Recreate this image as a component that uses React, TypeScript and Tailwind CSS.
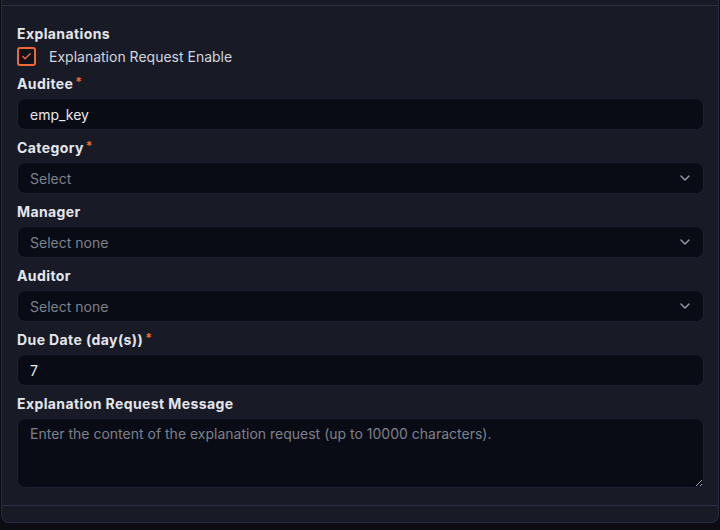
import { ChevronDown, Check } from "lucide-react";

function Label({ text, required }: { text: string; required?: boolean }) {
	return (
		<div className="flex h-5 translate-y-px items-center text-[14px] font-bold leading-5 tracking-[0.4px] text-[#e4e6ec]">
			<span>{text}</span>
			{required && (
				<span className="ml-[2px] -mt-[4px] text-[12px] font-bold text-[#f26b2a]">*</span>
			)}
		</div>
	);
}

function TextInput({ value }: { value: string }) {
	return (
		<div className="mt-[5px] flex h-8 items-center rounded-lg border border-[#1c2030] bg-[#090c14] px-3 text-[14px] text-[#e8e9ee]">
			{value}
		</div>
	);
}

function SelectBox({ placeholder }: { placeholder: string }) {
	return (
		<div className="mt-[5px] flex h-8 items-center justify-between rounded-lg border border-[#1c2030] bg-[#090c14] pl-3 pr-[10px] text-[14px] text-[#7d818d]">
			<span>{placeholder}</span>
			<ChevronDown className="h-4 w-4 text-[#9ca0ab]" strokeWidth={2} />
		</div>
	);
}

export default function App() {
	return (
		<div
			className="h-[530px] w-[720px] overflow-hidden bg-[#0b0d13]"
			style={{ fontFamily: "Inter, 'Noto Sans', sans-serif" }}
		>
			<div className="ml-px flex h-[523px] w-[718px] flex-col rounded-b-lg border-x border-b border-[#262b40] bg-[#181b26]">
				<div className="h-[6px] border-b border-[#2a2f44]" />
				<div className="flex flex-1 flex-col pl-[15px] pr-[14px] pt-[17px]">
					<Label text="Explanations" />
					<div className="mt-[3px] flex h-5 items-center gap-[13px]">
						<div className="flex h-[19px] w-[19px] items-center justify-center rounded-[3px] border-2 border-[#f0683a] bg-[#11131b]">
							<Check className="h-[11px] w-[11px] text-[#f0683a]" strokeWidth={3} />
						</div>
						<span className="text-[14px] text-[#d4d6de]">Explanation Request Enable</span>
					</div>
					<div className="mt-[7px] flex flex-col">
						<Label text="Auditee" required />
						<TextInput value="emp_key" />
					</div>
					<div className="mt-[7px] flex flex-col">
						<Label text="Category" required />
						<SelectBox placeholder="Select" />
					</div>
					<div className="mt-[7px] flex flex-col">
						<Label text="Manager" />
						<SelectBox placeholder="Select none" />
					</div>
					<div className="mt-[7px] flex flex-col">
						<Label text="Auditor" />
						<SelectBox placeholder="Select none" />
					</div>
					<div className="mt-[7px] flex flex-col">
						<Label text="Due Date (day(s))" required />
						<TextInput value="7" />
					</div>
					<div className="mt-[7px] flex flex-col">
						<Label text="Explanation Request Message" />
						<textarea
							className="mt-[5px] h-[70px] rounded-lg border border-[#1c2030] bg-[#090c14] px-3 py-[4px] text-[14px] text-[#e8e9ee] outline-none placeholder:text-[#7d818d]"
							placeholder="Enter the content of the explanation request (up to 10000 characters)."
						/>
					</div>
				</div>
				<div className="h-[17px] border-t border-[#2a2f44]" />
			</div>
		</div>
	);
}
